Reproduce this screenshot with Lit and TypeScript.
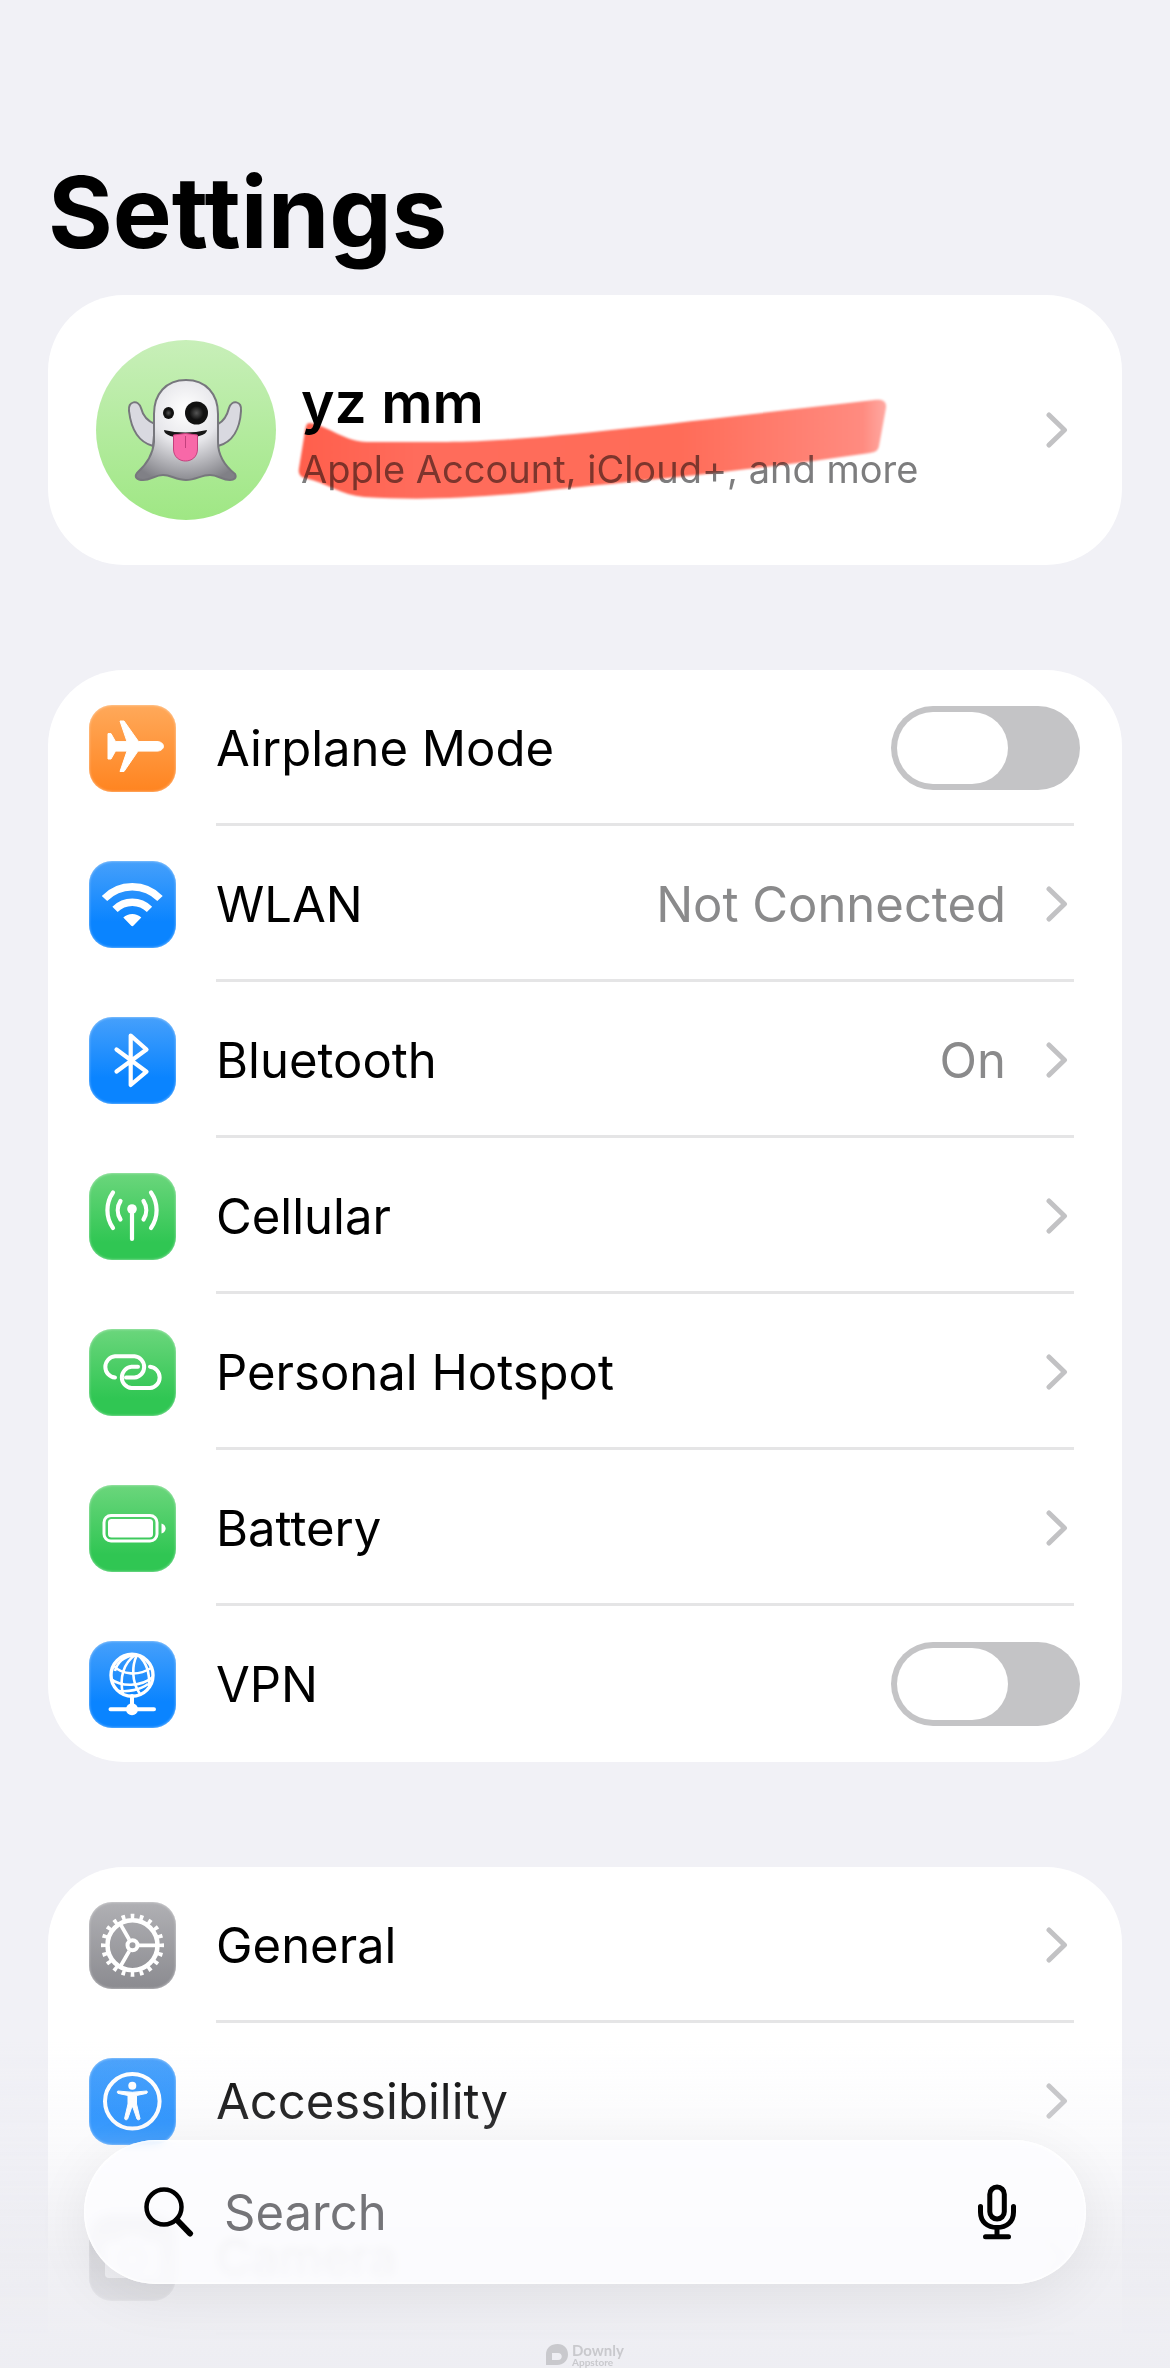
import {html, svg, css, LitElement, nothing, SVGTemplateResult} from 'lit';
import {customElement, property} from 'lit/decorators.js';
import {classMap} from 'lit/directives/class-map.js';

interface Item {
  icon: string;
  color: string;
  label: string;
  value?: string;
  toggle?: boolean;
}

const connectivity: Item[] = [
  {icon: 'airplane', color: 'orange', label: 'Airplane Mode', toggle: true},
  {icon: 'wifi', color: 'blue', label: 'WLAN', value: 'Not Connected'},
  {icon: 'bluetooth', color: 'blue', label: 'Bluetooth', value: 'On'},
  {icon: 'cellular', color: 'green', label: 'Cellular'},
  {icon: 'hotspot', color: 'green', label: 'Personal Hotspot'},
  {icon: 'battery', color: 'green', label: 'Battery'},
  {icon: 'vpn', color: 'blue', label: 'VPN', toggle: true},
];

const system: Item[] = [
  {icon: 'gear', color: 'gray', label: 'General'},
  {icon: 'accessibility', color: 'blue', label: 'Accessibility'},
  {icon: 'camera', color: 'gray', label: 'Camera'},
];

const icons: Record<string, SVGTemplateResult> = {
  airplane: svg`
    <path fill="#fff" stroke="#fff" stroke-width="1" stroke-linejoin="round"
      d="M31 16h4l14.500 20.500h18.500c4 0 6.500 2.500 6.500 4.800s-2.500 4.800-6.500 4.800H49L35 66.500h-4l7-20.400H26.500L22 54h-3V28.600h3l4.500 8H38z"/>`,
  wifi: svg`
    <g fill="none" stroke="#fff" stroke-width="7.500">
      <path d="M15.500 37.500a38.500 38.500 0 0 1 55.500 0"/>
      <path d="M26 48.300a24.500 24.500 0 0 1 34.500 0"/>
    </g>
    <path fill="#fff" d="M34.300 56.500a13 13 0 0 1 18 0l-7.500 7.800a2 2 0 0 1-3 0z"/>`,
  bluetooth: svg`
    <path fill="none" stroke="#fff" stroke-width="4.200" stroke-linecap="round" stroke-linejoin="round"
      d="M27.500 32.500 57.500 54.700 41.700 68V18.500l15.800 14L27.500 54.500"/>`,
  cellular: svg`
    <g fill="none" stroke="#fff" stroke-width="4.200" stroke-linecap="round">
      <path d="M43 37v29"/>
      <path d="M31.500 28a17 17 0 0 0 0 18.500M54.500 28a17 17 0 0 1 0 18.500"/>
      <path d="M24 19.500a31 31 0 0 0 0 35.500M62 19.500a31 31 0 0 1 0 35.500"/>
    </g>
    <circle cx="43" cy="36" r="4.800" fill="#fff"/>`,
  hotspot: svg`
    <g fill="none" stroke="#fff" stroke-width="4" stroke-linecap="round">
      <path d="M26 48.600a10.700 10.700 0 0 1 0-21.300h19.500a10.700 10.700 0 0 1 0 21.300H37"/>
      <path d="M61 37.800a10.700 10.700 0 0 1 0 21.300H42.500a10.700 10.700 0 0 1 0-21.300H49"/>
    </g>`,
  battery: svg`
    <rect x="15" y="30.500" width="53" height="25.500" rx="7" fill="none" stroke="#fff" stroke-width="3"/>
    <rect x="19" y="34" width="45" height="18.500" rx="3.500" fill="#fff"/>
    <path fill="#fff" d="M72.500 38.500c5.500 1.500 5.500 8.500 0 10z"/>`,
  vpn: svg`
    <g fill="none" stroke="#fff" stroke-width="2.600">
      <circle cx="43" cy="34.300" r="21" stroke-width="3.400"/>
      <path d="M46 14C35 22 30 36 34 53M48 14c-5 10-6 26 3 39M49 14c7 6 12 16 11 31M45 14C34 16 28 22 26 30"/>
      <path d="M25 25c8 9 25 10 37 2M22 38c10 8 30 8 42-2M30 50c9 1 21-1 29-7"/>
      <path d="M43 55v10M21.500 68.300h43.500" stroke-width="4" stroke-linecap="round"/>
    </g>
    <circle cx="43" cy="68.300" r="6" fill="#fff"/>`,
  gear: svg`
    <g fill="none" stroke="#fff">
      <circle cx="43.500" cy="43.300" r="25" stroke-width="4.600"/>
      <circle cx="43.500" cy="43.300" r="29" stroke-width="5" pathLength="60"
        stroke-dasharray="1.200 1.800" stroke-dashoffset=".6"/>
      <circle cx="43.500" cy="43.300" r="5" stroke-width="4"/>
      <path d="M50 43.300h18M40.200 37.500l-9-15.600M40.200 49.100l-9 15.600" stroke-width="3.800"/>
    </g>`,
  accessibility: svg`
    <circle cx="43.300" cy="43.300" r="27.300" fill="none" stroke="#fff" stroke-width="4"/>
    <circle cx="43.300" cy="27.800" r="4" fill="#fff"/>
    <path fill="#fff" stroke="#fff" stroke-width="1" stroke-linejoin="round"
      d="M29 33q14.300 2.500 28.600 0c1 0 1 2 0 2.400L47.500 37.500v8.500l3.500 14.500c0 1.500-2.500 1.800-3 .5l-4.200-12h-1l-4.200 12c-.5 1.300-3 1-3-.5L39 46v-8.500L29 35.400c-1-.4-1-2.400 0-2.400z"/>`,
  camera: svg`
    <path fill="#fff" d="M20 28h11l4-6h17l4 6h11a4 4 0 0 1 4 4v28a4 4 0 0 1-4 4H20a4 4 0 0 1-4-4V32a4 4 0 0 1 4-4z"/>
    <circle cx="43.500" cy="45" r="11" fill="none" stroke="#8e8e93" stroke-width="4"/>`,
};

const chevron = html`
  <svg class="chevron" viewBox="0 0 22 36" width="22" height="36" aria-hidden="true">
    <path fill="none" stroke="#c2c2c4" stroke-width="5" stroke-linecap="round" stroke-linejoin="round" d="M3 3l15.500 15L3 33"/>
  </svg>`;

const shared = css`
  * {
    box-sizing: border-box;
  }
  a {
    color: inherit;
    text-decoration: none;
  }
  svg {
    display: block;
    flex: none;
  }
`;

@customElement('settings-row')
export class SettingsRow extends LitElement {
  static styles = [shared, css`
    :host {
      display: block;
    }
    .row {
      position: relative;
      display: flex;
      align-items: center;
      gap: 40px;
      height: 156px;
      padding-left: 41px;
      padding-right: 54px;
    }
    .row.switch {
      padding-right: 42px;
    }
    .row.line::after {
      content: '';
      position: absolute;
      left: 168px;
      right: 48px;
      bottom: 0;
      height: 3px;
      background: #e5e5e6;
    }
    .tile {
      width: 87px;
      height: 87px;
      border-radius: 23px;
      box-shadow: inset 0 0 2px 1px rgba(255, 255, 255, .3);
    }
    .orange {
      background: linear-gradient(#ffa95a, #ff8420);
    }
    .blue {
      background: linear-gradient(#46a0fb, #0a84ff 70%);
    }
    .green {
      background: linear-gradient(#6bd67c, #30c653 80%);
    }
    .gray {
      background: linear-gradient(#b0b0b4, #8b8b90);
    }
    .label {
      flex: 1;
      padding-top: 2px;
    }
    .value {
      padding-top: 2px;
      color: #8a8a8b;
    }
    .toggle {
      appearance: none;
      flex: none;
      width: 189px;
      height: 84px;
      margin: 0;
      padding: 6px;
      border-radius: 42px;
      background: #c4c4c6;
    }
    .toggle::before {
      content: '';
      display: block;
      width: 111px;
      height: 72px;
      border-radius: 36px;
      background: #fff;
    }
    .toggle:checked {
      background: #34c759;
    }
    .toggle:checked::before {
      margin-left: auto;
    }
  `];

  @property({attribute: false}) item!: Item;
  @property({type: Boolean}) last = false;

  render() {
    const {icon, color, label, value, toggle} = this.item;
    const classes = classMap({row: true, switch: !!toggle, line: !this.last});
    const tile = html`
      <svg class="tile ${color}" viewBox="0 0 87 87" aria-hidden="true">${icons[icon]}</svg>`;

    if (toggle) {
      return html`
        <div class=${classes}>
          ${tile}
          <label class="label" for="toggle">${label}</label>
          <input class="toggle" id="toggle" type="checkbox" role="switch">
        </div>`;
    }
    return html`
      <a class=${classes} href="#${icon}">
        ${tile}
        <span class="label">${label}</span>
        ${value ? html`<span class="value">${value}</span>` : nothing}
        ${chevron}
      </a>`;
  }
}

@customElement('account-card')
export class AccountCard extends LitElement {
  static styles = [shared, css`
    :host {
      display: block;
    }
    .card {
      position: relative;
      display: flex;
      align-items: center;
      gap: 25px;
      height: 270px;
      padding: 0 54px 0 48px;
      border-radius: 76px;
      background: #fff;
    }
    .avatar {
      width: 180px;
      height: 180px;
      border-radius: 50%;
      background: linear-gradient(#c8efb9, #9fe784);
    }
    .text {
      flex: 1;
      display: flex;
      flex-direction: column;
      gap: 4px;
      padding-top: 2px;
    }
    .name {
      font-size: 57px;
      line-height: 72px;
      font-weight: 600;
    }
    .details {
      font-size: 38px;
      line-height: 52px;
      color: #7d7d7e;
    }
    .marker {
      position: absolute;
      left: 248px;
      top: 100px;
      overflow: visible;
      mix-blend-mode: multiply;
      filter: blur(1px);
    }
  `];

  render() {
    return html`
      <a class="card" href="#account">
        <svg class="avatar" viewBox="0 0 180 180" aria-hidden="true">
          <defs>
            <radialGradient id="sheet" cx=".5" cy=".3" r=".75">
              <stop offset="0" stop-color="#fff"/>
              <stop offset=".45" stop-color="#e6e6ea"/>
              <stop offset="1" stop-color="#808086"/>
            </radialGradient>
            <radialGradient id="eye">
              <stop offset="0" stop-color="#555"/>
              <stop offset=".6" stop-color="#111"/>
            </radialGradient>
          </defs>
          <g stroke="#77777d" stroke-width="2" fill="#d9d9e0">
            <path d="M57 106C42 102 35 88 33 71c-1-10 9-12 12-3 2 8 6 13 14 16z"/>
            <path d="M122 106c15-4 22-18 23-35 1-10-9-12-12-3-2 8-5 13-11 16z"/>
            <path fill="url(#sheet)" d="M90 40c20 0 32 14 32 34v28c0 14 7 24 17 32 2 4-1 6-5 6-8 0-12-5-20-5-9 0-14 5-24 5s-15-5-23-5-12 5-20 5c-6 0-9-3-6-7 10-9 16-19 17-31V74c0-20 12-34 32-34z"/>
          </g>
          <ellipse cx="72.500" cy="73" rx="5.500" ry="6" fill="url(#eye)"/>
          <circle cx="100.500" cy="73" r="11.500" fill="url(#eye)"/>
          <path fill="#161616" d="M68 90q21 5 43 0c0 10-43 11-43 0z"/>
          <path fill="#f868a8" stroke="#c43f7c" d="M77.500 95q12-3 24 0v14c0 16-24 16-24 0z"/>
          <path stroke="#c43f7c" d="M89.500 96v12"/>
        </svg>
        <span class="text">
          <span class="name">yz mm</span>
          <span class="details">Apple Account, iCloud+, and more</span>
        </span>
        ${chevron}
        <svg class="marker" viewBox="0 0 594 106" width="594" height="106" aria-hidden="true">
          <defs>
            <linearGradient id="ink">
              <stop offset="0" stop-color="#ff5f4c"/>
              <stop offset=".2" stop-color="#ff6c5c"/>
              <stop offset=".65" stop-color="#ff6c58"/>
              <stop offset=".96" stop-color="#ff8b80"/>
              <stop offset="1" stop-color="#ffa9a2"/>
            </linearGradient>
          </defs>
          <path fill="url(#ink)" d="M14 28c18 3 36 19 57 19h80c80 0 235-20 427-42 8-1 13 1 12 8l-7 38c-1 5-4 6-9 7-150 22-278 32-345 40-70 6-110 7-161 4-23-2-37-14-59-19-5-1-7-5-6-10l6-37c1-5 1-8 5-8z"/>
        </svg>
      </a>`;
  }
}

@customElement('search-dock')
export class SearchDock extends LitElement {
  static styles = [shared, css`
    :host {
      position: fixed;
      left: 0;
      right: 0;
      bottom: 0;
      display: block;
      padding: 100px 84px 0;
      background: linear-gradient(rgba(237, 237, 242, 0), rgba(237, 237, 244, .22) 90px, rgba(236, 236, 241, .8) 220px, #eeeef3);
    }
    .bar {
      display: flex;
      align-items: center;
      gap: 30px;
      height: 144px;
      padding: 0 70px 0 60px;
      border-radius: 72px;
      background: rgba(253, 253, 255, .86);
      backdrop-filter: blur(4px);
      box-shadow: 0 12px 56px rgba(0, 0, 0, .07), inset 0 0 2px 1px #fff;
    }
    .input {
      flex: 1;
      min-width: 0;
      padding: 2px 0 0;
      border: none;
      outline: none;
      background: none;
      font: inherit;
      color: #000;
    }
    .input::placeholder {
      color: #747478;
      opacity: 1;
    }
    .mic {
      padding: 0;
      border: none;
      background: none;
    }
    .badge {
      display: flex;
      justify-content: center;
      gap: 4px;
      padding-top: 60px;
      height: 84px;
      color: #c9c9cd;
      font-family: Lato, sans-serif;
      font-weight: 700;
    }
    .badge-text {
      display: flex;
      flex-direction: column;
    }
    .badge-name {
      font-size: 15px;
      line-height: 13px;
    }
    .badge-sub {
      font-size: 10px;
      line-height: 10px;
    }
  `];

  render() {
    return html`
      <div class="bar">
        <label for="search" aria-label="Search">
          <svg viewBox="0 0 50 50" width="50" height="50" aria-hidden="true">
            <circle cx="20" cy="20" r="17.500" fill="none" stroke="#000" stroke-width="4.500"/>
            <path d="M33 33l13 13.500" stroke="#000" stroke-width="6" stroke-linecap="round"/>
          </svg>
        </label>
        <input class="input" id="search" type="text" placeholder="Search">
        <button class="mic" type="button" aria-label="Dictate">
          <svg viewBox="0 0 38 56" width="38" height="56" aria-hidden="true">
            <g fill="none" stroke="#000" stroke-width="5" stroke-linecap="round">
              <rect x="11.800" y="3" width="14.500" height="32" rx="7.250"/>
              <path d="M2.500 22.500v5.500c0 10 7 15.500 16.500 15.500S35.500 38 35.500 28v-5.500M19 44v8M7.500 52.800h23"/>
            </g>
          </svg>
        </button>
      </div>
      <div class="badge">
        <svg viewBox="0 0 22 21" width="22" height="21" aria-hidden="true">
          <path fill="currentColor" fill-rule="evenodd" d="M0 21V10.500C0 4 5 0 11.500 0S22 4.500 22 10.500 17.500 21 11 21zM6 9v7h6c5 0 5-7 0-7z"/>
        </svg>
        <div class="badge-text">
          <span class="badge-name">Downly</span>
          <span class="badge-sub">Appstore</span>
        </div>
      </div>`;
  }
}

@customElement('app-root')
export class AppRoot extends LitElement {
  static styles = [shared, css`
    :host {
      display: flex;
      flex-direction: column;
      height: 100vh;
      padding: 152px 48px 0;
      box-sizing: border-box;
      overflow: hidden;
      background: #f1f1f6;
      color: #000;
      font-family: Inter, 'Liberation Sans', sans-serif;
      font-size: 49px;
      line-height: 64px;
    }
    .title {
      margin: 0 0 23px;
      font-size: 99px;
      line-height: 120px;
      font-weight: 700;
    }
    .group {
      margin-top: 105px;
      border-radius: 76px;
      background: #fff;
    }
    .group.open {
      flex: 1 0 auto;
      border-radius: 76px 76px 0 0;
    }
  `];

  renderGroup(items: Item[], open = false) {
    return html`
      <section class=${classMap({group: true, open})}>
        ${items.map((item, i) => html`
          <settings-row .item=${item} ?last=${!open && i === items.length - 1}></settings-row>`)}
      </section>`;
  }

  render() {
    return html`
      <h1 class="title">Settings</h1>
      <account-card></account-card>
      ${this.renderGroup(connectivity)}
      ${this.renderGroup(system, true)}
      <search-dock></search-dock>`;
  }
}
